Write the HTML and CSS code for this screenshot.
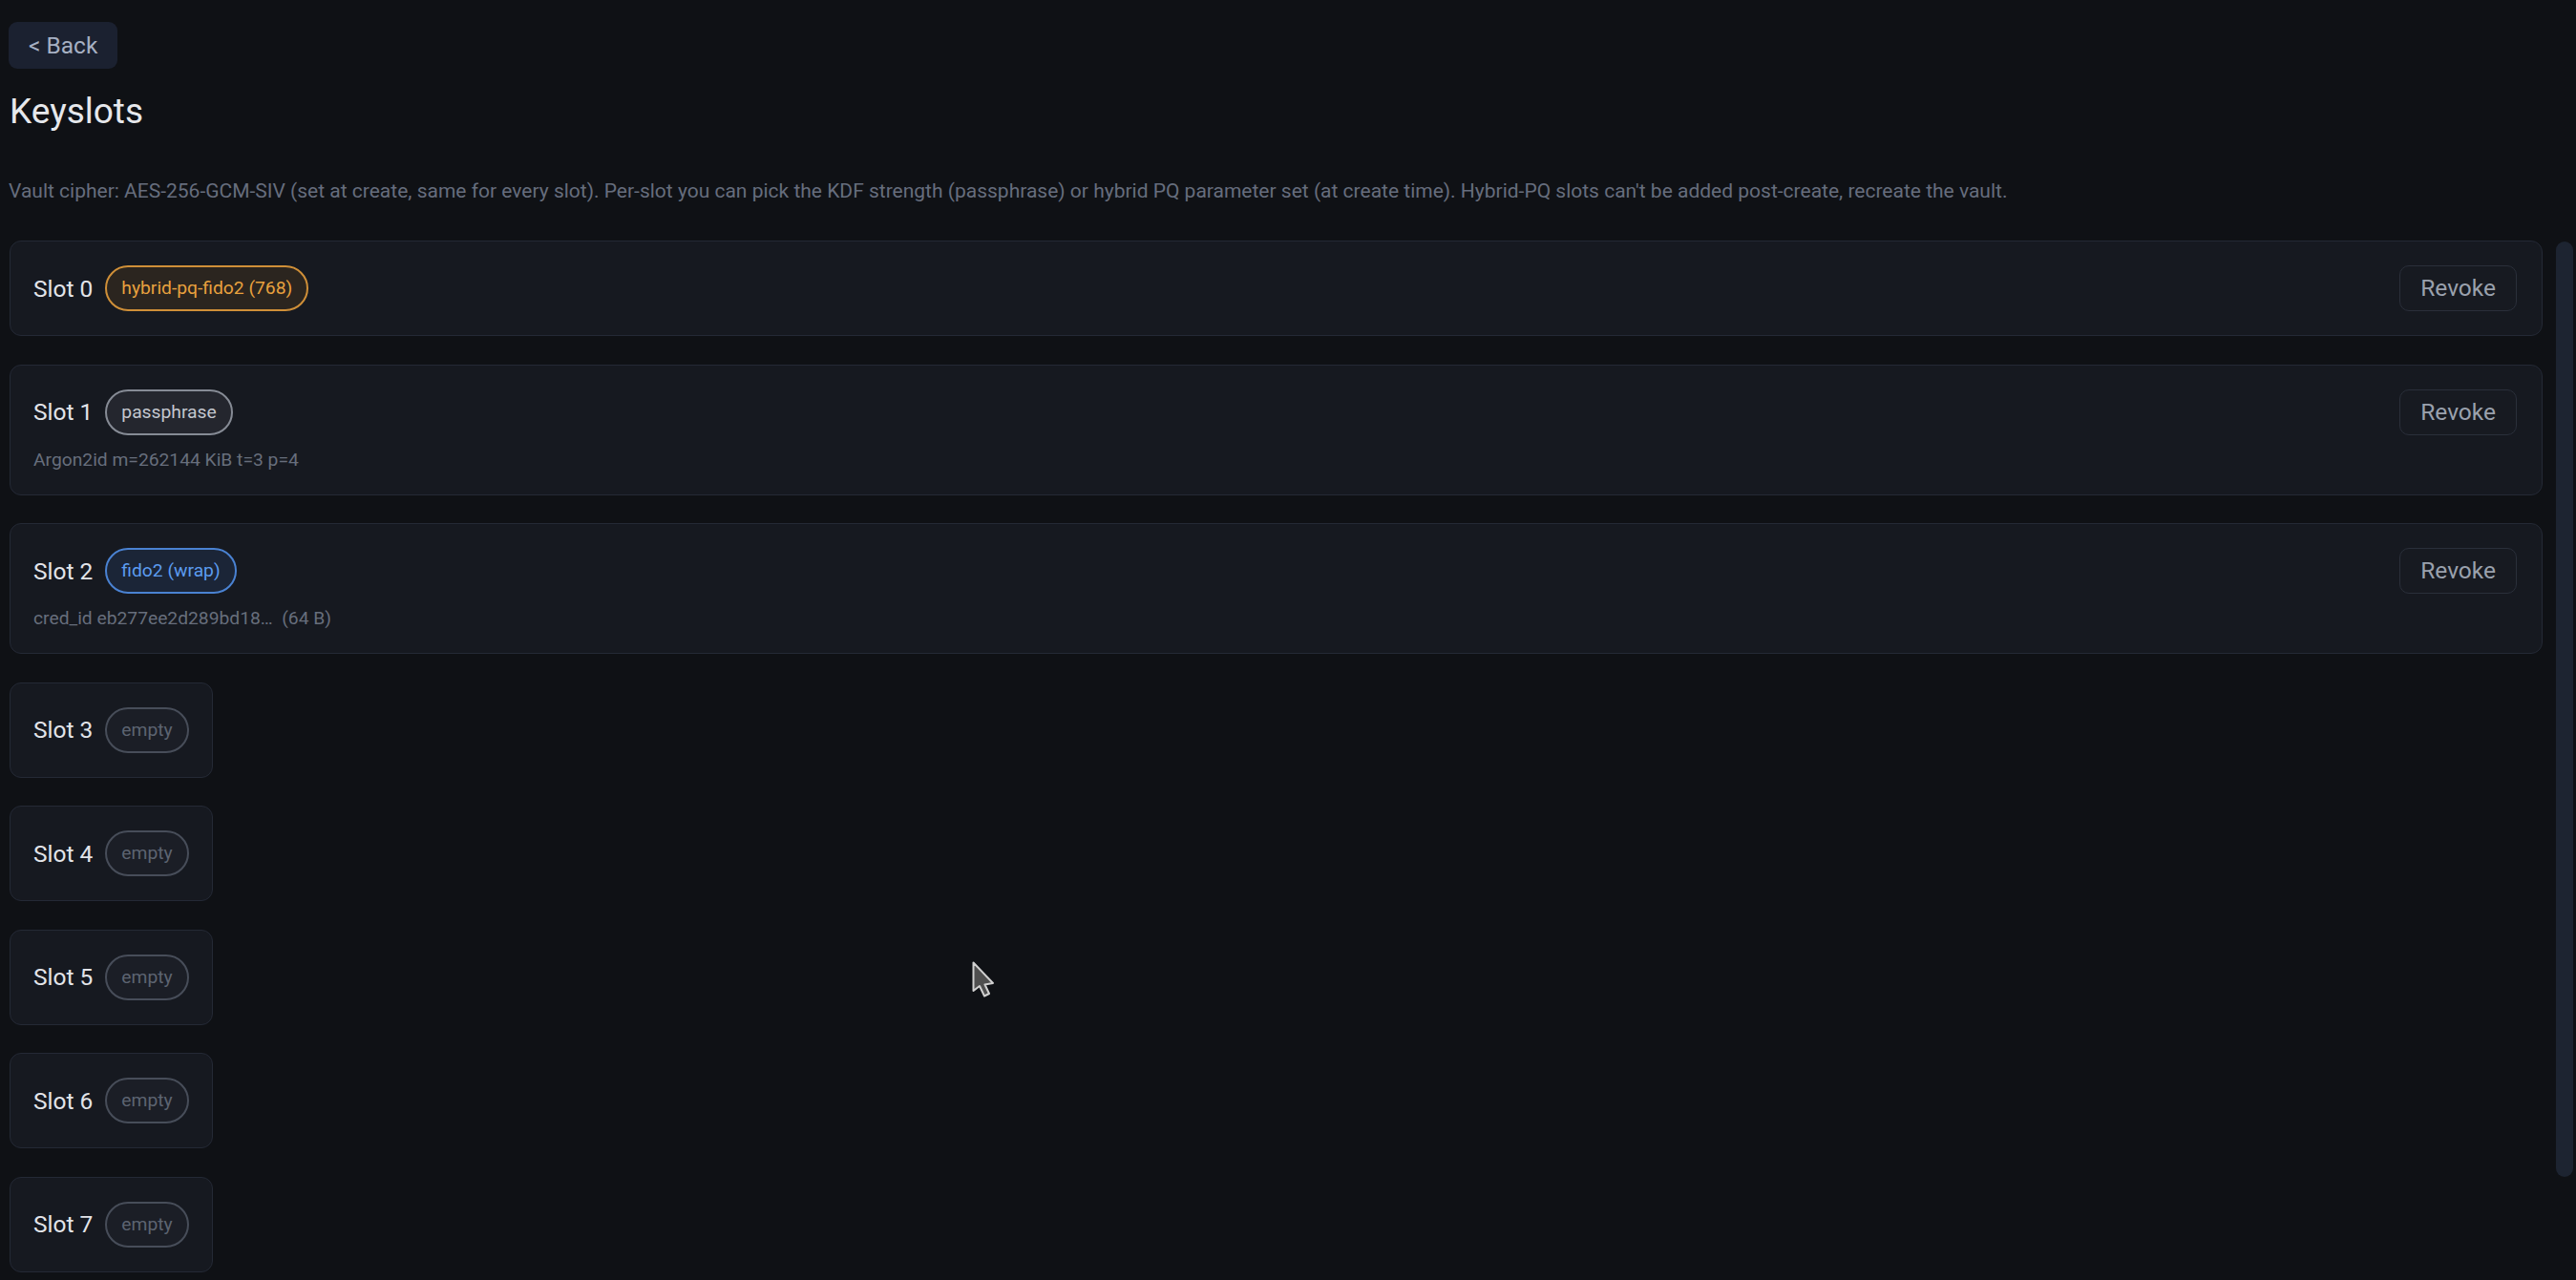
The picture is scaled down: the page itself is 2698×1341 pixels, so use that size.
FILE: index.html
```html
<!DOCTYPE html>
<html>
	<head>
		<meta charset="utf-8">
		<title>Keyslots</title>
		<link rel="stylesheet" href="styles.css">
	</head>
	<body>
		<div class="page">
			<button class="back">&lt; Back</button>
			<h1 class="title">Keyslots</h1>
			<p class="note">Vault cipher: AES-256-GCM-SIV (set at create, same for every slot). Per-slot you can pick the KDF strength (passphrase) or hybrid PQ parameter set (at create time). Hybrid-PQ slots can't be added post-create, recreate the vault.</p>

			<div class="slots">
				<div class="slot filled">
					<div class="slot-info">
						<div class="slot-head">
							<span class="slot-name">Slot 0</span>
							<span class="tag tag-pq">hybrid-pq-fido2 (768)</span>
						</div>
					</div>
					<button class="revoke">Revoke</button>
				</div>

				<div class="slot filled">
					<div class="slot-info">
						<div class="slot-head">
							<span class="slot-name">Slot 1</span>
							<span class="tag tag-pass">passphrase</span>
						</div>
						<div class="slot-meta">Argon2id m=262144 KiB t=3 p=4</div>
					</div>
					<button class="revoke">Revoke</button>
				</div>

				<div class="slot filled">
					<div class="slot-info">
						<div class="slot-head">
							<span class="slot-name">Slot 2</span>
							<span class="tag tag-fido">fido2 (wrap)</span>
						</div>
						<div class="slot-meta">cred_id eb277ee2d289bd18…&nbsp; (64 B)</div>
					</div>
					<button class="revoke">Revoke</button>
				</div>

				<div class="slot">
					<div class="slot-head">
						<span class="slot-name">Slot 3</span>
						<span class="tag tag-empty">empty</span>
					</div>
				</div>
				<div class="slot">
					<div class="slot-head">
						<span class="slot-name">Slot 4</span>
						<span class="tag tag-empty">empty</span>
					</div>
				</div>
				<div class="slot">
					<div class="slot-head">
						<span class="slot-name">Slot 5</span>
						<span class="tag tag-empty">empty</span>
					</div>
				</div>
				<div class="slot">
					<div class="slot-head">
						<span class="slot-name">Slot 6</span>
						<span class="tag tag-empty">empty</span>
					</div>
				</div>
				<div class="slot">
					<div class="slot-head">
						<span class="slot-name">Slot 7</span>
						<span class="tag tag-empty">empty</span>
					</div>
				</div>
			</div>
		</div>

		<!-- scrollbar thumb of the slot list (native bars are hidden in capture) -->
		<div class="thumb"></div>

		<!-- mouse pointer from the capture -->
		<svg class="pointer" width="26" height="40" viewBox="0 0 26 40">
			<path d="M1.5 1.5 L1.5 31 L8 26 L13 36.5 L18 34 L13.5 24.5 L22 23 Z" fill="#4f4f4f" stroke="#d0d0d0" stroke-width="2" stroke-linejoin="round"/>
		</svg>
	</body>
</html>
```

FILE: styles.css
```css
* { box-sizing: border-box; }
html, body { margin: 0; height: 100%; }
body {
	background: #0f1115;
	color: #e4e6eb;
	font-family: Roboto, "Noto Sans", sans-serif;
	overflow: hidden;
}
.page {
	height: 100%;
	display: flex;
	flex-direction: column;
	padding: 23px 3px 0 9px;
}
.back {
	align-self: flex-start;
	font-family: inherit;
	font-size: 24.5px;
	line-height: 37px;
	padding: 6px 21px;
	color: #a6b0c3;
	background: #1b2130;
	border: 0;
	border-radius: 9px;
}
.title {
	margin: 24px 0 0 1px;
	font-size: 37px;
	font-weight: 400;
	line-height: 42px;
	color: #e6e8ec;
}
.note {
	margin: 48px 0 37px;
	font-size: 21px;
	line-height: 29px;
	color: #666d7d;
}
.slots {
	flex: 1;
	min-height: 0;
	overflow-y: auto;
	display: flex;
	flex-direction: column;
	align-items: flex-start;
	gap: 29.5px;
	padding: 0 32px 0 1px;
}
.slot {
	flex-shrink: 0;
	background: #161920;
	border: 1px solid #242935;
	border-radius: 12px;
	padding: 25px 24px;
}
.slot.filled {
	align-self: stretch;
	display: flex;
	justify-content: space-between;
	align-items: flex-start;
	padding-right: 26px;
}
.slot-head {
	display: flex;
	align-items: center;
	gap: 13px;
}
.slot-name {
	font-size: 24.5px;
	color: #e2e4e9;
}
.tag {
	font-size: 19.25px;
	line-height: 28px;
	padding: 8px 15px;
	border: 2px solid;
	border-radius: 24px;
}
.tag-pq { color: #e8a13e; border-color: #cf8f38; background: #2b251f; }
.tag-pass { color: #c3c7ce; border-color: #868b95; background: #24262e; }
.tag-fido { color: #5c9cf0; border-color: #4a82d2; background: #1b2537; }
.tag-empty { color: #5d6471; border-color: #474d59; background: #1b1e26; }
.slot-meta {
	margin-top: 14px;
	font-size: 19.25px;
	line-height: 23px;
	color: #676e7c;
	white-space: pre;
}
.revoke {
	font-family: inherit;
	font-size: 24.5px;
	line-height: 46px;
	padding: 0 21px;
	color: #9aa1ad;
	background: #171a21;
	border: 1px solid #2a2f3a;
	border-radius: 10px;
}
.thumb {
	position: absolute;
	top: 253px;
	right: 3px;
	width: 18px;
	height: 980px;
	border-radius: 9px;
	background: #1d2431;
}
.pointer {
	position: absolute;
	left: 1018px;
	top: 1007px;
}
```
